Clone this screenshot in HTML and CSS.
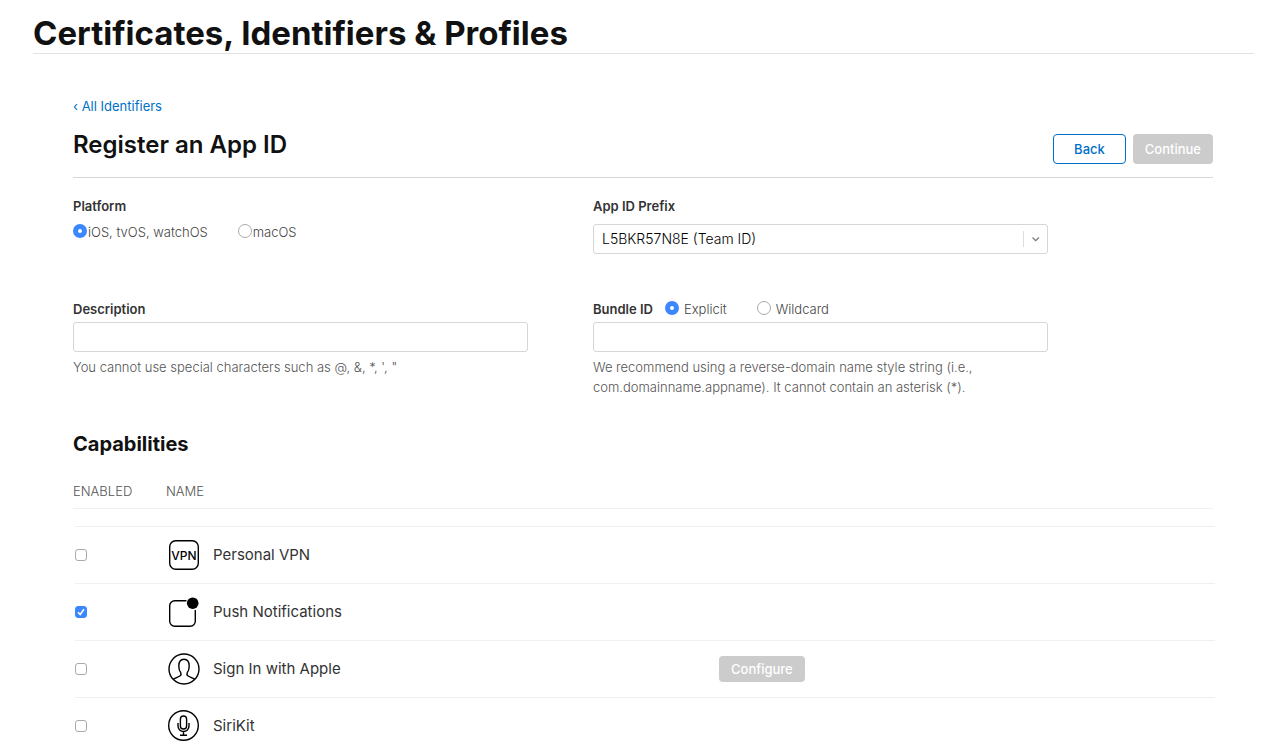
FILE: index.html
```html
<!DOCTYPE html>
<html lang="en">
<head>
<meta charset="UTF-8">
<meta name="viewport" content="width=device-width, initial-scale=1.0">
<title>Certificates, Identifiers &amp; Profiles</title>
<link rel="stylesheet" href="styles.css">
</head>
<body>
<header class="page-header">
  <h1>Certificates, Identifiers &amp; Profiles</h1>
</header>

<main class="content">
  <a class="back-link" href="#">‹ All Identifiers</a>

  <div class="toolbar">
    <h2>Register an App ID</h2>
    <div class="toolbar-buttons">
      <button type="button" class="btn btn-back">Back</button>
      <button type="submit" form="appIdForm" class="btn" disabled>Continue</button>
    </div>
  </div>

  <form id="appIdForm">
    <div class="form-row">
      <div class="field" role="radiogroup" aria-labelledby="platformLabel">
        <span class="field-label" id="platformLabel">Platform</span>
        <div class="radio-group">
          <label><input type="radio" name="platform" value="ios" checked>iOS, tvOS, watchOS</label>
          <label><input type="radio" name="platform" value="macos">macOS</label>
        </div>
      </div>
      <div class="field">
        <label class="field-label" for="prefix">App ID Prefix</label>
        <div class="select-wrap">
          <select id="prefix" name="prefix">
            <option>L5BKR57N8E (Team ID)</option>
          </select>
          <svg class="select-arrow" width="24" height="16" viewBox="0 0 24 16" fill="none">
            <path d="M0.5 0v16" stroke="#ddd"/>
            <path d="M9.500 6.500l3.200 3.200 3.200-3.200" stroke="#777" stroke-width="1.200"/>
          </svg>
        </div>
      </div>
    </div>

    <div class="form-row">
      <div class="field">
        <label class="field-label" for="description">Description</label>
        <input type="text" id="description" name="description">
        <p class="hint">You cannot use special characters such as @, &amp;, *, ', "</p>
      </div>
      <div class="field">
        <div class="bundle-head">
          <label class="field-label" for="bundle">Bundle ID</label>
          <div class="radio-group radio-group-spaced">
            <label><input type="radio" name="bundleType" value="explicit" checked>Explicit</label>
            <label><input type="radio" name="bundleType" value="wildcard">Wildcard</label>
          </div>
        </div>
        <input type="text" id="bundle" name="bundle">
        <p class="hint">We recommend using a reverse-domain name style string (i.e., com.domainname.appname). It cannot contain an asterisk (*).</p>
      </div>
    </div>

    <h3>Capabilities</h3>
    <table class="capabilities">
      <thead>
        <tr>
          <th class="col-enabled">ENABLED</th>
          <th class="col-name">NAME</th>
        </tr>
      </thead>
      <tbody>
        <tr>
          <td class="col-enabled"><input type="checkbox" id="vpn" name="capability" value="vpn"></td>
          <td class="col-name">
            <label for="vpn">
              <svg width="32" height="32" viewBox="0 0 32 32" fill="none">
                <rect x="1.700" y="1.700" width="28.600" height="28.600" rx="6" stroke="#000" stroke-width="1.400"/>
                <text class="vpn-text" x="16" y="20.500" text-anchor="middle">VPN</text>
              </svg>
              Personal VPN
            </label>
          </td>
          <td class="col-action"></td>
        </tr>
        <tr>
          <td class="col-enabled"><input type="checkbox" id="push" name="capability" value="push" checked></td>
          <td class="col-name">
            <label for="push">
              <svg width="32" height="32" viewBox="0 0 32 32" fill="none">
                <path d="M18.500 4.700H6.700a5 5 0 0 0-5 5v15.600a5 5 0 0 0 5 5h15.600a5 5 0 0 0 5-5V14" stroke="#000" stroke-width="1.400"/>
                <circle cx="24.700" cy="7.200" r="5.800" fill="#000"/>
              </svg>
              Push Notifications
            </label>
          </td>
          <td class="col-action"></td>
        </tr>
        <tr>
          <td class="col-enabled"><input type="checkbox" id="signin" name="capability" value="signin"></td>
          <td class="col-name">
            <label for="signin">
              <svg width="32" height="32" viewBox="0 0 32 32" fill="none" stroke="#000" stroke-width="1.400">
                <circle cx="16" cy="16" r="15"/>
                <path d="M5.200 26.300c1.500-1.200 5.300-2.300 7-3.600 1-.8.9-2.300.5-3.200-1.500-1.700-1.900-3.600-1.900-6.500 0-4.400 1.800-6.800 5.200-6.800s5.200 2.400 5.200 6.800c0 2.900-.4 4.800-1.900 6.500-.4.900-.5 2.400.5 3.200 1.700 1.300 5.500 2.400 7 3.600"/>
              </svg>
              Sign In with Apple
            </label>
          </td>
          <td class="col-action"><button type="button" class="btn btn-small" disabled>Configure</button></td>
        </tr>
        <tr>
          <td class="col-enabled"><input type="checkbox" id="siri" name="capability" value="siri"></td>
          <td class="col-name">
            <label for="siri">
              <svg width="32" height="32" viewBox="0 0 32 32" fill="none" stroke="#000" stroke-width="1.400">
                <circle cx="15.500" cy="15.500" r="14.800"/>
                <rect x="12.400" y="6" width="6.200" height="13" rx="3.100"/>
                <path d="M10 13v3a5.500 5.500 0 0 0 11 0v-3M15.500 21.500v4M12 25.300h7"/>
              </svg>
              SiriKit
            </label>
          </td>
          <td class="col-action"></td>
        </tr>
      </tbody>
    </table>
  </form>
</main>
</body>
</html>
```
FILE: styles.css
```css
* {
  box-sizing: border-box;
}
body {
  font-family: Inter, 'Liberation Sans', sans-serif;
  font-size: 13px;
  line-height: 20px;
  color: #333;
  background-color: #fff;
  margin: 0;
}
h1, h2, h3, p {
  margin: 0;
}
h1, h2, h3 {
  color: #111;
  font-weight: 600;
}
.page-header {
  margin: 0 8px 0 33px;
  padding-top: 13px;
  border-bottom: 1px solid #e3e3e3;
}
h1 {
  font-size: 33px;
  font-weight: 700;
  line-height: 40px;
}
.content {
  margin: 0 49px 0 73px;
  padding-top: 42px;
}
.back-link {
  display: block;
  color: #0070c9;
  text-decoration: none;
}

/* title + buttons */
.toolbar {
  display: flex;
  justify-content: space-between;
  padding: 14px 0 13px;
  border-bottom: 1px solid #d6d6d6;
  margin-bottom: 18px;
}
h2 {
  font-size: 24px;
  line-height: 30px;
}
.toolbar-buttons {
  display: flex;
  gap: 7px;
  padding-top: 4px;
}
.btn {
  height: 30px;
  padding: 0 12px;
  border: none;
  border-radius: 4px;
  background-color: #ccc;
  color: #fff;
  font-family: inherit;
  font-size: 13px;
  font-weight: 500;
}
.btn-back {
  padding: 0 20px;
  border: 1px solid #0070c9;
  background-color: #fff;
  color: #0070c9;
  cursor: pointer;
}
.btn-small {
  height: 26px;
}

/* form */
.form-row {
  display: grid;
  grid-template-columns: 455px 455px;
  column-gap: 65px;
}
.form-row:first-child {
  margin-bottom: 45px;
}
.field-label {
  display: block;
  font-weight: 600;
}
.radio-group {
  display: flex;
  gap: 30px;
  padding-top: 6px;
  color: #444;
  font-weight: 300;
}
.radio-group label {
  display: flex;
  gap: 1px;
}
.bundle-head {
  display: flex;
  gap: 12px;
}
.radio-group-spaced {
  padding-top: 0;
}
.radio-group-spaced label {
  gap: 5px;
}
input[type="radio"] {
  appearance: none;
  width: 14px;
  height: 14px;
  margin: 2px 0 0;
  border: 1px solid #aaa;
  border-radius: 50%;
  background-color: #fff;
}
input[type="radio"]:checked {
  border: 5px solid #3b87fd;
}
input[type="text"],
select {
  display: block;
  width: 100%;
  height: 30px;
  padding: 0 8px;
  border: 1px solid #d6d6d6;
  border-radius: 3px;
  background-color: #fff;
  font-family: inherit;
}
input[type="text"] {
  margin-top: 3px;
}
select {
  appearance: none;
  padding-bottom: 2px;
  color: #000;
  font-size: 14px;
  font-weight: 300;
}
.select-wrap {
  position: relative;
  margin-top: 8px;
}
.select-arrow {
  position: absolute;
  top: 7px;
  right: 1px;
  pointer-events: none;
}
.hint {
  max-width: 400px;
  padding-top: 5px;
  color: #555;
  font-weight: 300;
}

/* capabilities */
h3 {
  margin-top: 33px;
  font-size: 20px;
  font-weight: 700;
  line-height: 28px;
}
.capabilities {
  display: block;
  margin-top: 23px;
}
.capabilities thead,
.capabilities tbody {
  display: block;
}
.capabilities tr {
  display: flex;
  align-items: center;
}
.capabilities th,
.capabilities td {
  padding: 0;
}
.capabilities th {
  color: #555;
  font-weight: 300;
  text-align: left;
}
.capabilities thead tr {
  padding-bottom: 7px;
  border-bottom: 1px solid #f0f0f0;
}
.capabilities tbody {
  margin: 17px -2px 0 2px;
}
.capabilities tbody tr {
  padding: 12px 0;
  border-top: 1px solid #f0f0f0;
}
.capabilities tbody tr:last-child {
  padding-bottom: 0;
}
.col-enabled {
  width: 93px;
}
.col-name {
  width: 551px;
}
.col-name label {
  display: flex;
  align-items: center;
  gap: 13px;
  font-size: 15px;
}
.col-action {
  display: flex;
}
input[type="checkbox"] {
  display: block;
  appearance: none;
  width: 12px;
  height: 12px;
  margin: 0;
  border: 1px solid #aaa;
  border-radius: 3px;
}
input[type="checkbox"]:checked {
  border-color: #3b87fd;
  background: #3b87fd url("data:image/svg+xml,%3Csvg xmlns='http://www.w3.org/2000/svg' viewBox='0 0 10 10'%3E%3Cpath d='M2 5.2l2.200 2.300L8 2.300' fill='none' stroke='white' stroke-width='1.600'/%3E%3C/svg%3E");
}
.vpn-text {
  fill: #000;
  font-size: 12px;
  font-weight: 500;
}
```
